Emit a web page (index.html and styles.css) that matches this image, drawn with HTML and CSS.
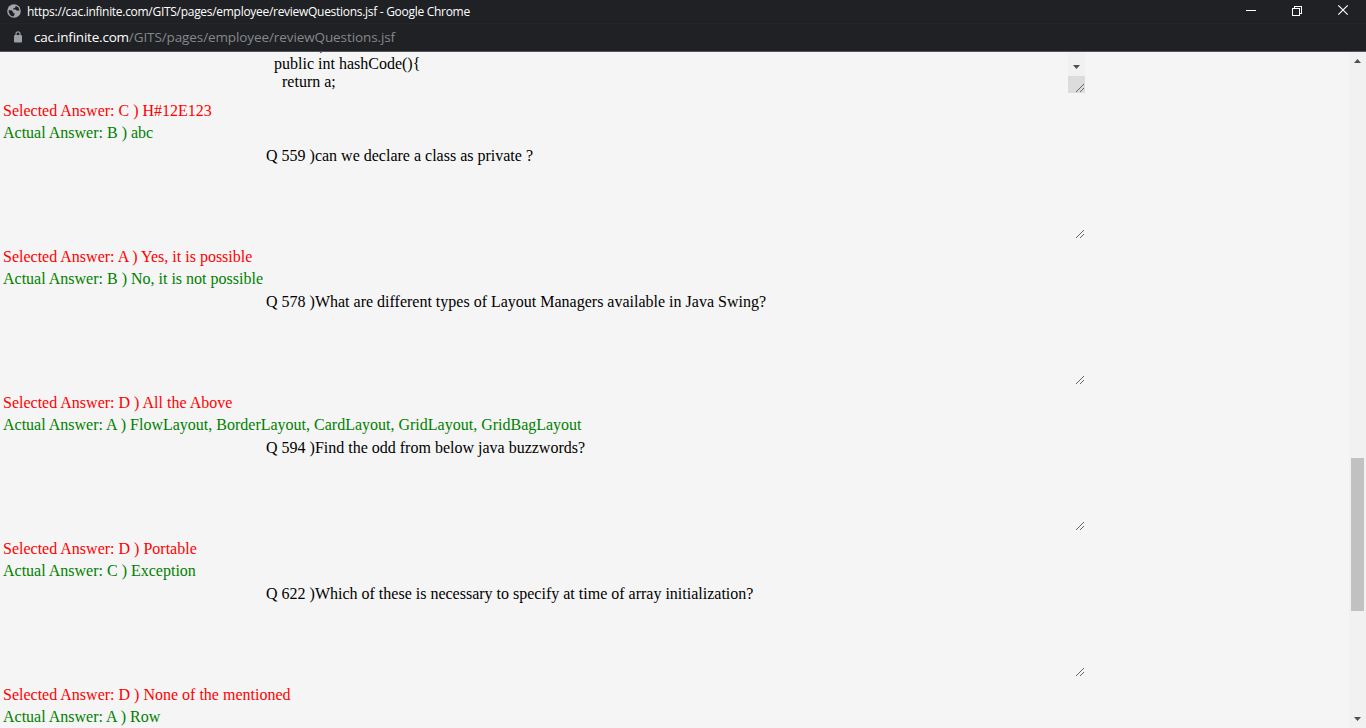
FILE: index.html
```html
<!DOCTYPE html>
<html lang="en">
<head>
<meta charset="utf-8">
<title>Review Questions</title>
<link rel="stylesheet" href="styles.css">
</head>
<body>
<div class="window">
  <header class="titlebar">
    <svg class="globe" viewBox="0 0 14 14"><circle cx="7" cy="7" r="6.8" fill="#a2a6ab"/><path d="M1.6 6.2H4.500L6.200 8V9.200H7.600V10.600L6.600 12.400C3.600 12.400 1.500 9.600 1.600 6.200ZM6 1.700H8.600V3L7.300 4.200H6.200V5.400H8.400L9.400 6.600H12.400C12.500 4 10.400 1.200 6 1.700Z" fill="#202124"/></svg>
    <span class="title">https://cac.infinite.com/GITS/pages/employee/reviewQuestions.jsf - Google Chrome</span>
    <svg class="controls" viewBox="0 0 104 14" fill="none" stroke="#fff"><path d="M0 7.500h10M46.500 5.500h7v7h-7zM48.500 5.500v-2h7v7h-2" shape-rendering="crispEdges"/><path d="m92.300 2.300 9.400 9.400m0-9.400-9.400 9.400" stroke-width="1.200"/></svg>
  </header>
  <div class="addressbar">
    <svg class="lock" viewBox="0 0 8 12"><path d="M2 5V2.800a2 2 0 0 1 4 0V5" fill="none" stroke="#9aa0a6" stroke-width="1.200"/><rect y="4" width="8" height="7.500" rx="1" fill="#9aa0a6"/></svg>
    <span class="url"><span class="host">cac.infinite.com</span><span class="path">/GITS/pages/employee/reviewQuestions.jsf</span></span>
  </div>
  <div class="viewport">
    <main class="content">
      <div class="code">
        <pre class="source"><span class="clipped-line">        ;</span>
public int hashCode(){
  return a;</pre>
        <div class="code-scroll">
          <svg class="down" viewBox="0 0 7 4"><path d="M0 0h7L3.500 4z" fill="#505050"/></svg>
          <div class="corner"><svg class="grip" viewBox="0 0 8 8"><path d="M0 8 8 0M4 8 8 4"/></svg></div>
        </div>
      </div>
      <section class="item">
        <p class="selected">Selected Answer: C ) H#12E123</p>
        <p class="actual">Actual Answer: B ) abc</p>
        <div class="question"><span>Q 559 )can we declare a class as private ?</span><svg class="grip" viewBox="0 0 8 8"><path d="M0 8 8 0M4 8 8 4"/></svg></div>
      </section>
      <section class="item">
        <p class="selected">Selected Answer: A ) Yes, it is possible</p>
        <p class="actual">Actual Answer: B ) No, it is not possible</p>
        <div class="question"><span>Q 578 )What are different types of Layout Managers available in Java Swing?</span><svg class="grip" viewBox="0 0 8 8"><path d="M0 8 8 0M4 8 8 4"/></svg></div>
      </section>
      <section class="item">
        <p class="selected">Selected Answer: D ) All the Above</p>
        <p class="actual">Actual Answer: A ) FlowLayout, BorderLayout, CardLayout, GridLayout, GridBagLayout</p>
        <div class="question"><span>Q 594 )Find the odd from below java buzzwords?</span><svg class="grip" viewBox="0 0 8 8"><path d="M0 8 8 0M4 8 8 4"/></svg></div>
      </section>
      <section class="item">
        <p class="selected">Selected Answer: D ) Portable</p>
        <p class="actual">Actual Answer: C ) Exception</p>
        <div class="question"><span>Q 622 )Which of these is necessary to specify at time of array initialization?</span><svg class="grip" viewBox="0 0 8 8"><path d="M0 8 8 0M4 8 8 4"/></svg></div>
      </section>
      <section class="item">
        <p class="selected">Selected Answer: D ) None of the mentioned</p>
        <p class="actual">Actual Answer: A ) Row</p>
      </section>
    </main>
    <aside class="scrollbar">
      <svg viewBox="0 0 7 4"><path d="M0 4h7L3.500 0z" fill="#505050"/></svg>
      <div class="thumb"></div>
      <svg class="last" viewBox="0 0 7 4"><path d="M0 0h7L3.500 4z" fill="#505050"/></svg>
    </aside>
  </div>
</div>
</body>
</html>
```
FILE: styles.css
```css
* { box-sizing: border-box; }
body { margin: 0; overflow: hidden; }
svg { display: block; flex: none; }
p, pre { margin: 0; }

.window { width: 1366px; height: 728px; display: flex; flex-direction: column; background: #f5f5f5; }

.titlebar { height: 24px; flex: none; display: flex; align-items: center; background: #202124; border-bottom: 1px solid #242528; padding: 0 16px 0 7px; color: #fff; }
.globe { width: 14px; height: 14px; margin-top: -1px; }
.title { font: 12px/22px "Open Sans", "Noto Sans", sans-serif; letter-spacing: -0.29px; margin-left: 6px; white-space: nowrap; }
.controls { width: 104px; height: 14px; margin: -3px 0 0 auto; }

.addressbar { height: 28px; flex: none; display: flex; align-items: center; background: #202124; border-bottom: 1px solid #55565a; padding: 0 0 2px 14px; }
.lock { width: 8px; height: 12px; }
.url { font: 13.5px/24px "Open Sans", "Noto Sans", sans-serif; margin-left: 12px; white-space: nowrap; }
.host { color: #fff; letter-spacing: -0.22px; }
.path { color: #85888c; letter-spacing: -0.1px; }

.viewport { flex: 1; min-height: 0; display: flex; }
.content { flex: 1; overflow: hidden; font: 16px/22px "Liberation Serif", "Times New Roman", serif; white-space: nowrap; }

.code { height: 48px; display: flex; overflow: hidden; }
.source { width: 794px; margin: -15px 0 0 274px; font: 16px/18px "Liberation Serif", "Times New Roman", serif; color: #000; }
.clipped-line { padding-left: 13px; }
.code-scroll { width: 17px; height: 41px; background: #f1f1f1; display: flex; flex-direction: column; justify-content: space-between; align-items: center; padding-top: 13px; }
.down { width: 7px; height: 4px; }
.corner { width: 17px; height: 17px; background: #dcdcdc; display: flex; align-items: flex-end; justify-content: flex-end; padding: 1px; }

.grip { width: 8px; height: 8px; fill: none; stroke: #555; stroke-width: 0.9; }
.item { height: 146px; }
.selected { height: 22px; padding-left: 3px; color: #f00; }
.actual { height: 22px; padding-left: 3px; color: #008000; }
.question { width: 819px; height: 94px; margin-left: 266px; padding: 1px 1px 0 0; color: #000; display: flex; justify-content: space-between; }
.question .grip { align-self: flex-end; }

.scrollbar { width: 17px; background: #f1f1f1; display: flex; flex-direction: column; align-items: center; padding: 7px 2px 7px 2px; }
.scrollbar svg { width: 7px; height: 4px; }
.thumb { width: 13px; height: 153px; margin-top: 395px; background: #c1c1c1; }
.last { margin-top: auto; }
```
